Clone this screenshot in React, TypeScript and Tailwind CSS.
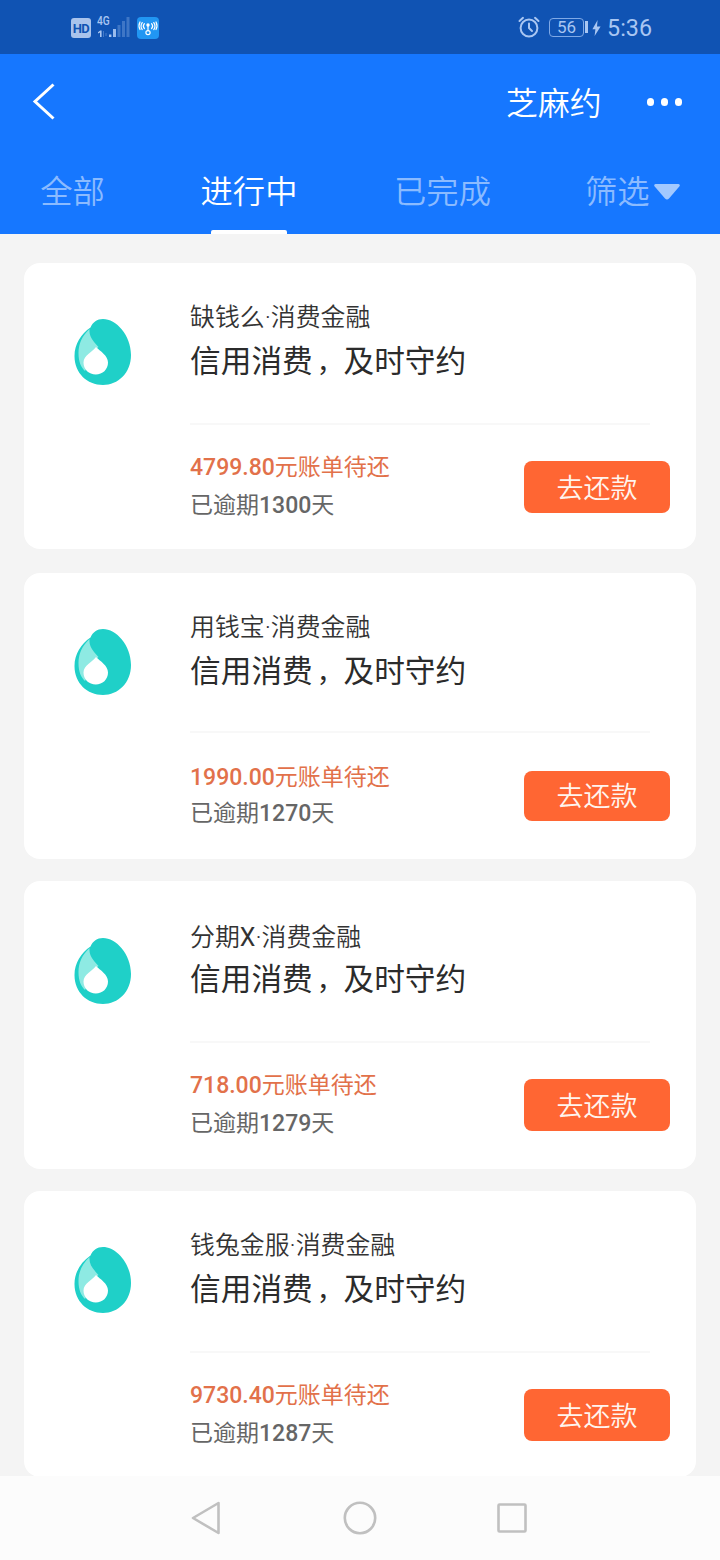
import React, { useState } from 'react';

interface Bill {
  id: number;
  merchant: string;
  amount: string;
  overdueDays: number;
  cardClass: string;
  logoClass: string;
  merchantClass: string;
  titleClass: string;
  dividerClass: string;
  amountClass: string;
  overdueClass: string;
  buttonClass: string;
}

const BILLS: Bill[] = [
  {
    id: 1,
    merchant: '缺钱么·消费金融',
    amount: '4799.80',
    overdueDays: 1300,
    cardClass: 'h-[286px]',
    logoClass: 'pt-14',
    merchantClass: 'mt-[33px]',
    titleClass: '',
    dividerClass: 'mt-[39px]',
    amountClass: 'mt-6',
    overdueClass: '',
    buttonClass: 'mt-9 h-[52px] pt-1',
  },
  {
    id: 2,
    merchant: '用钱宝·消费金融',
    amount: '1990.00',
    overdueDays: 1270,
    cardClass: 'mt-6 h-[286px]',
    logoClass: 'pt-14',
    merchantClass: 'mt-[33px]',
    titleClass: '',
    dividerClass: 'mt-[37px]',
    amountClass: 'mt-[26px]',
    overdueClass: '-mt-0.5',
    buttonClass: 'mt-[38px] h-[50px] pt-0.5',
  },
  {
    id: 3,
    merchant: '分期X·消费金融',
    amount: '718.00',
    overdueDays: 1279,
    cardClass: 'mt-[22px] h-[288px]',
    logoClass: 'pt-[57px]',
    merchantClass: 'mt-[35px]',
    titleClass: '-mt-0.5',
    dividerClass: 'mt-[39px]',
    amountClass: 'mt-6',
    overdueClass: '',
    buttonClass: 'mt-9 h-[52px] pt-1',
  },
  {
    id: 4,
    merchant: '钱兔金服·消费金融',
    amount: '9730.40',
    overdueDays: 1287,
    cardClass: 'mt-[22px] h-[286px]',
    logoClass: 'pt-14',
    merchantClass: 'mt-[33px]',
    titleClass: '',
    dividerClass: 'mt-[39px]',
    amountClass: 'mt-6',
    overdueClass: '',
    buttonClass: 'mt-9 h-[52px] pt-1',
  },
];

const TABS = [
  { key: 'all', label: '全部', className: 'ml-10 w-[65px]' },
  { key: 'active', label: '进行中', className: 'ml-[95px] w-[98px]' },
  { key: 'done', label: '已完成', className: 'ml-24 w-[97px]' },
];

function StatusBar() {
  return (
    <div className="flex h-[54px] shrink-0 items-center bg-[#1053b3] pl-[71px] pr-[68px] text-[#a9c6f2]">
      <div className="mt-0.5 flex h-[20px] w-[20px] items-center justify-center rounded-[3px] bg-[#a9c3ec] font-['Roboto',sans-serif] text-[13px] font-bold leading-none tracking-[-0.5px] text-[#1053b3]">
        HD
      </div>
      <div className="ml-1.5 flex h-[22px] w-[34px] items-end">
        <div className="flex h-full w-4 flex-col justify-between font-['Roboto',sans-serif] font-medium leading-none">
          <span className="block origin-left scale-x-[0.85] text-[12px] leading-[11px]">4G</span>
          <svg width="16" height="8" viewBox="0 0 16 8" fill="currentColor">
            <path d="M1 2.200 3.200.6h1.400V7H3V2.400L1 3.400Z" />
            <path d="M6.500 1v6M9 3v3" stroke="currentColor" strokeWidth="1" opacity=".35" />
            <rect x="12" y="4.500" width="2.400" height="2.500" />
          </svg>
        </div>
        <svg width="18" height="22" viewBox="0 0 18 22" fill="currentColor">
          <rect x="0" y="13" width="3" height="8" opacity=".9" />
          <rect x="4.500" y="9" width="3" height="12" opacity=".3" />
          <rect x="9" y="5" width="3" height="16" opacity=".3" />
          <rect x="13.500" y="1" width="3" height="20" opacity=".3" />
        </svg>
      </div>
      <svg className="ml-1.5 mt-0.5" width="22" height="22" viewBox="0 0 22 22" fill="none">
        <rect width="22" height="22" rx="4" fill="#2196f3" />
        <g stroke="#fff" strokeWidth="1.200" strokeLinecap="round">
          <path d="M7.400 6.600a3.800 3.800 0 0 0 0 5M5.200 5.600a6.200 6.200 0 0 0 0 7M3 5a8 8 0 0 0 0 7.500" />
          <path d="M14.600 6.600a3.800 3.800 0 0 1 0 5M16.800 5.600a6.200 6.200 0 0 1 0 7M19 5a8 8 0 0 1 0 7.500" />
          <path d="M11 9v5" />
          <circle cx="11" cy="15.600" r="2.100" />
        </g>
        <circle cx="11" cy="8" r="1.700" fill="#fff" />
      </svg>

      <svg className="ml-auto" width="22" height="22" viewBox="0 0 22 22" fill="none" stroke="currentColor" strokeWidth="2" strokeLinecap="round">
        <circle cx="11" cy="12" r="8.400" />
        <path d="M11 7.500V12l3 3" strokeLinejoin="round" />
        <path d="M1.500 5 5 1.800M20.500 5 17 1.800" />
      </svg>
      <div className="ml-[9px] flex h-[19px] w-[35px] items-center justify-center rounded-[4px] border border-[#7fa9e6] font-['Roboto',sans-serif] text-[17px] leading-none">
        56
      </div>
      <div className="ml-px h-3 w-[3px] bg-[#a9c6f2]" />
      <svg className="ml-1 mt-0.5" width="9" height="16" viewBox="0 0 9 16" fill="currentColor">
        <path d="M5.600 0 .4 9.200h3L2.600 16 8.600 6.400H5Z" />
      </svg>
      <span className="ml-1.5 mt-[3px] font-['Roboto',sans-serif] text-[23.300px] leading-none">5:36</span>
    </div>
  );
}

function MerchantLogo() {
  return (
    <svg width="58" height="66" viewBox="0 0 58 66">
      <path d="M29 0C42 0 57 16 57 36C57 54 44 66 29 66C13 66 .5 54 .5 37C.5 25 7 15 16.500 8.500C19 3 23 0 29 0Z" fill="#1fd0c8" />
      <path d="M15.500 10C8 17 4.500 25 4.500 34C4.500 43 7 48 11 52L22 30L24.500 28C18 21 15 17 15.500 10Z" fill="#8eeae3" />
      <path d="M22 28C26 32 34 36.500 34 43.500C34 50.500 28.500 55.500 21.800 55.500C15 55.500 9.500 50.500 9.500 43.500C9.500 36.500 18.500 33 22 28Z" fill="#fff" />
    </svg>
  );
}

function BillCard({ bill }: { bill: Bill }) {
  return (
    <div className={`flex shrink-0 rounded-[16px] bg-white ${bill.cardClass}`}>
      <div className={`w-[166px] shrink-0 pl-[50px] ${bill.logoClass}`}>
        <MerchantLogo />
      </div>
      <div className="flex-1 pr-[26px]">
        <p className={`text-[24.900px] font-[350] leading-[44px] text-[#333] ${bill.merchantClass}`}>
          {bill.merchant.split(/([A-Z])/).map((part, i) => (
            <span key={i} className={i % 2 ? 'font-normal' : ''}>
              {part}
            </span>
          ))}
        </p>
        <h2 className={`h-11 text-[30.700px] font-normal leading-[44px] text-[#2b2b2b] ${bill.titleClass}`}>
          信用消费<span className="ml-1 text-[26.700px]">，</span>及时守约
        </h2>
        <div className={`mr-5 h-0.5 bg-[#f8f8f8] ${bill.dividerClass}`} />
        <div className="flex items-start justify-between">
          <div className="text-[23px] leading-[38px]">
            <p className={`text-[#e2714a] ${bill.amountClass}`}>
              <span className="font-medium">{bill.amount}</span>元账单待还
            </p>
            <p className={`text-[#666] ${bill.overdueClass}`}>
              已逾期<span className="font-medium">{bill.overdueDays}</span>天
            </p>
          </div>
          <button className={`w-[146px] rounded-[8px] bg-[#ff6633] text-[27px] font-[350] leading-none text-[#fff4ee] ${bill.buttonClass}`}>
            去还款
          </button>
        </div>
      </div>
    </div>
  );
}

export default function App() {
  const [activeTab, setActiveTab] = useState('active');

  return (
    <div className="flex h-[1560px] w-[720px] flex-col overflow-hidden bg-[#f4f4f4] font-['Roboto','Noto_Sans_CJK_SC',sans-serif]">
      <StatusBar />

      <header className="h-[180px] shrink-0 bg-[#1677ff] text-white">
        <div className="flex h-24 items-center pl-8 pr-[38px]">
          <svg width="24" height="38" viewBox="0 0 24 38" fill="none" stroke="currentColor" strokeWidth="3">
            <path d="M21.500 1.500 3 18.500l18.500 17" />
          </svg>
          <h1 className="ml-auto pt-1.5 text-[31.800px] font-[350]">芝麻约</h1>
          <div className="ml-[45px] flex gap-[6.500px]">
            <span className="size-[7.500px] rounded-full bg-white" />
            <span className="size-[7.500px] rounded-full bg-white" />
            <span className="size-[7.500px] rounded-full bg-white" />
          </div>
        </div>

        <nav className="flex h-[84px]">
          {TABS.map((tab) => (
            <button
              key={tab.key}
              onClick={() => setActiveTab(tab.key)}
              className={`flex flex-col items-center whitespace-nowrap text-[32.300px] font-[350] ${tab.className} ${
                activeTab === tab.key ? 'text-white' : 'text-[#8bbbff]'
              }`}
            >
              <span className="h-20 leading-[84px]">{tab.label}</span>
              {activeTab === tab.key && <span className="h-1 w-[76px] rounded-t-[2px] bg-white" />}
            </button>
          ))}
          <button className="ml-[94px] flex h-[84px] items-center text-[32.300px] font-[350] text-[#8bbbff]">
            筛选
            <svg className="ml-1" width="26" height="16" viewBox="0 0 26 16" fill="#a2c9ff">
              <path d="M1.500 0h23q2.200.8.800 2.500L15 14.500q-2 1.800-4 0L.7 2.500Q-.7.800 1.500 0Z" />
            </svg>
          </button>
        </nav>
      </header>

      <main className="flex min-h-0 flex-1 flex-col overflow-hidden px-6 pt-[29px]">
        {BILLS.map((bill) => (
          <BillCard key={bill.id} bill={bill} />
        ))}
      </main>

      <footer className="flex h-[84px] shrink-0 items-center justify-center bg-[#fcfcfc]">
        <svg width="340" height="40" viewBox="0 0 340 40" fill="none" stroke="#c0c0c0" strokeWidth="2.600" strokeLinejoin="round">
          <path d="M28.500 5v30L3 20Z" />
          <circle cx="170" cy="20" r="15.200" />
          <rect x="308.500" y="6.500" width="27" height="27" rx="1" />
        </svg>
      </footer>
    </div>
  );
}
